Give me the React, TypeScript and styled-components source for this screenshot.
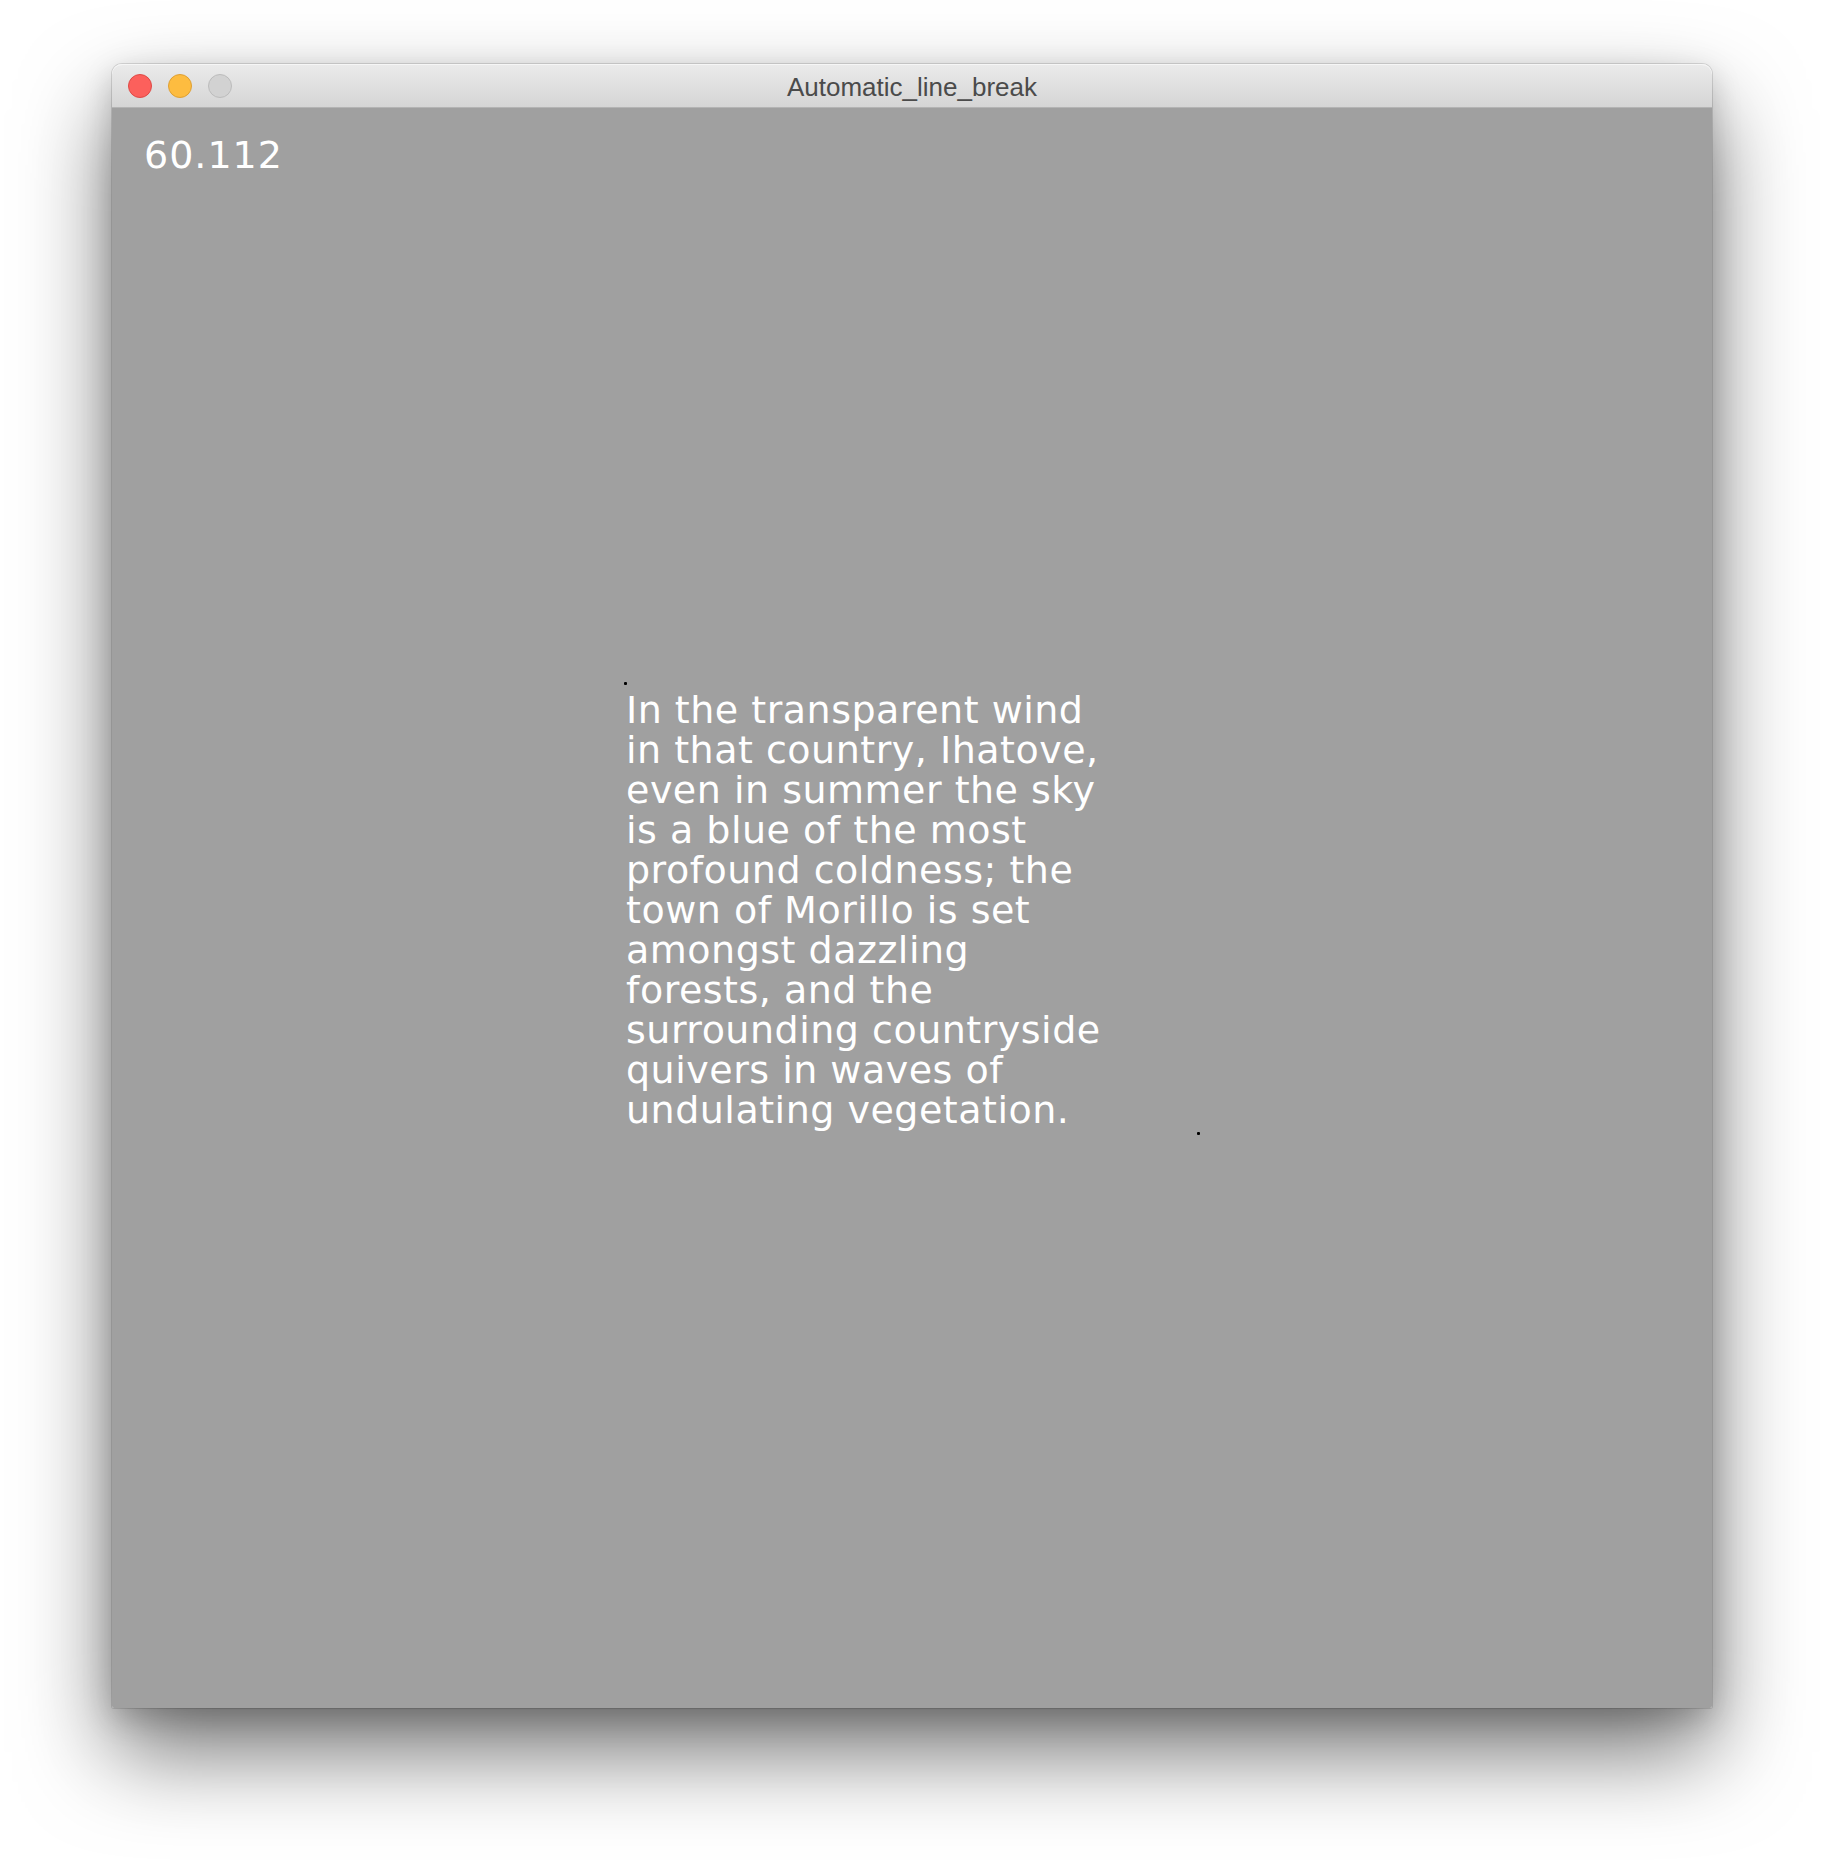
import React from "react";
import styled, { createGlobalStyle } from "styled-components";

const GlobalStyle = createGlobalStyle`
  html, body {
    margin: 0;
    padding: 0;
    background: #ffffff;
  }
  body {
    font-family: "DejaVu Sans", sans-serif;
  }
`;

const Desktop = styled.div`
  width: 1824px;
  height: 1868px;
  box-sizing: border-box;
  padding: 64px 0 0 112px;
  background: #ffffff;
  overflow: hidden;
`;

const Window = styled.div`
  width: 1600px;
  display: flex;
  flex-direction: column;
  border-radius: 10px 10px 2px 2px;
  box-shadow: 0 0 0 1px rgba(0, 0, 0, 0.12), 0 44px 90px rgba(0, 0, 0, 0.55),
    0 10px 30px rgba(0, 0, 0, 0.18);
`;

const TitleBar = styled.div`
  position: relative;
  height: 43px;
  display: flex;
  align-items: center;
  padding: 0 16px;
  gap: 16px;
  border-radius: 10px 10px 0 0;
  background: linear-gradient(#ebebeb, #d5d5d5);
  border-bottom: 1px solid #b4b4b4;
  box-shadow: inset 0 1px 0 #f6f6f6;
`;

const Light = styled.span<{ $fill: string; $edge: string }>`
  width: 24px;
  height: 24px;
  box-sizing: border-box;
  border-radius: 50%;
  background: ${(p) => p.$fill};
  border: 1px solid ${(p) => p.$edge};
  flex: none;
`;

const Title = styled.div`
  position: absolute;
  inset: 0;
  padding-top: 3px;
  display: flex;
  align-items: center;
  justify-content: center;
  font-family: "Liberation Sans", Arial, sans-serif;
  font-size: 26px;
  color: #4b4b4b;
  pointer-events: none;
`;

const Canvas = styled.div`
  position: relative;
  height: 1600px;
  background: #a0a0a0;
  border-radius: 0 0 2px 2px;
  box-sizing: border-box;
  padding: 27px 0 0 32px;
  color: #ffffff;
  font-family: "DejaVu Sans", "Noto Sans", sans-serif;
  font-size: 38px;
  line-height: 40px;
  letter-spacing: 0.5px;
`;

const FrameRate = styled.div`
  margin: 0;
  letter-spacing: 1px;
`;

const Paragraph = styled.div`
  margin: 515px 0 0 482px;
  display: flex;
  flex-direction: column;
`;

const Line = styled.span`
  display: block;
  white-space: pre;
`;

const Marker = styled.span`
  position: absolute;
  width: 3px;
  height: 3px;
  background: #000000;
  border-radius: 1px;
`;

const lines = [
  "In the transparent wind",
  "in that country, Ihatove,",
  "even in summer the sky",
  "is a blue of the most",
  "profound coldness; the",
  "town of Morillo is set",
  "amongst dazzling",
  "forests, and the",
  "surrounding countryside",
  "quivers in waves of",
  "undulating vegetation.",
];

export default function App() {
  return (
    <>
      <GlobalStyle />
      <Desktop>
        <Window>
          <TitleBar>
            <Light $fill="#fc605c" $edge="#de4a46" />
            <Light $fill="#fdbc40" $edge="#dea033" />
            <Light $fill="#d2d2d2" $edge="#bcbcbc" />
            <Title>Automatic_line_break</Title>
          </TitleBar>
          <Canvas>
            <FrameRate>60.112</FrameRate>
            <Paragraph>
              {lines.map((l) => (
                <Line key={l}>{l}</Line>
              ))}
            </Paragraph>
            <Marker style={{ left: 512, top: 574 }} />
            <Marker style={{ left: 1085, top: 1024 }} />
          </Canvas>
        </Window>
      </Desktop>
    </>
  );
}
